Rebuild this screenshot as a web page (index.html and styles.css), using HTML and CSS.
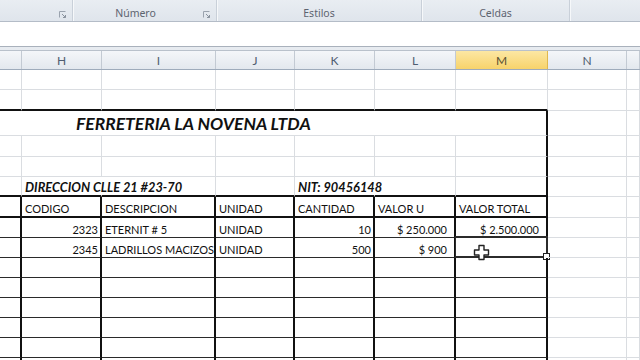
FILE: index.html
```html
<!DOCTYPE html>
<html lang="es">
<head>
    <meta charset="UTF-8">
    <title>Factura - Ferreteria</title>
    <link rel="stylesheet" href="styles.css">
</head>
<body>
    <div class="ribbon">
        <div class="group g-font"><span class="launcher"><svg width="7" height="7" viewBox="0 0 7 7"><path d="M0.5 6.5V0.5H6.5" fill="none" stroke="#9aa3ae"/><path d="M3 3L6.5 6.5M4 6.5H6.5V4" fill="none" stroke="#8a939e"/></svg></span></div>
        <div class="group g-num">Número<span class="launcher"><svg width="7" height="7" viewBox="0 0 7 7"><path d="M0.5 6.5V0.5H6.5" fill="none" stroke="#9aa3ae"/><path d="M3 3L6.5 6.5M4 6.5H6.5V4" fill="none" stroke="#8a939e"/></svg></span></div>
        <div class="group g-styles">Estilos</div>
        <div class="group g-cells">Celdas</div>
        <div class="group g-rest"></div>
    </div>
    <div class="formula-bar"></div>
    <div class="gap-bar"></div>

    <div class="sheet">
        <div class="heads">
            <div class="head"></div>
            <div class="head">H</div>
            <div class="head">I</div>
            <div class="head">J</div>
            <div class="head">K</div>
            <div class="head">L</div>
            <div class="head active">M</div>
            <div class="head">N</div>
            <div class="head"></div>
        </div>

        <div class="row">
            <div class="cell"></div><div class="cell"></div><div class="cell"></div><div class="cell"></div><div class="cell"></div><div class="cell"></div><div class="cell"></div><div class="cell"></div><div class="cell"></div>
        </div>
        <div class="row h21">
            <div class="cell bb"></div><div class="cell bb"></div><div class="cell bb"></div><div class="cell bb"></div><div class="cell bb"></div><div class="cell bb"></div><div class="cell bb"></div><div class="cell"></div><div class="cell"></div>
        </div>

        <!-- encabezado de la factura -->
        <div class="row h25">
            <div class="cell merged br title">FERRETERIA LA NOVENA LTDA</div>
            <div class="cell"></div><div class="cell"></div>
        </div>
        <div class="row h21">
            <div class="cell"></div><div class="cell"></div><div class="cell"></div><div class="cell"></div><div class="cell"></div><div class="cell"></div><div class="cell br"></div><div class="cell"></div><div class="cell"></div>
        </div>
        <div class="row">
            <div class="cell"></div><div class="cell"></div><div class="cell"></div><div class="cell"></div><div class="cell"></div><div class="cell"></div><div class="cell br"></div><div class="cell"></div><div class="cell"></div>
        </div>
        <div class="row">
            <div class="cell bb"></div>
            <div class="cell bb nr info">DIRECCION CLLE 21 #23-70</div>
            <div class="cell bb"></div>
            <div class="cell bb"></div>
            <div class="cell bb nr info">NIT: 90456148</div>
            <div class="cell bb"></div>
            <div class="cell bb br"></div>
            <div class="cell"></div><div class="cell"></div>
        </div>

        <!-- detalle -->
        <div class="row h21 boxed">
            <div class="cell bb br"></div>
            <div class="cell bb br">CODIGO</div>
            <div class="cell bb br">DESCRIPCION</div>
            <div class="cell bb br">UNIDAD</div>
            <div class="cell bb br">CANTIDAD</div>
            <div class="cell bb br">VALOR U</div>
            <div class="cell bb br">VALOR TOTAL</div>
            <div class="cell"></div><div class="cell"></div>
        </div>
        <div class="row boxed">
            <div class="cell bl br"></div>
            <div class="cell bl br num">2323</div>
            <div class="cell bl br">ETERNIT # 5</div>
            <div class="cell bl br">UNIDAD</div>
            <div class="cell bl br num">10</div>
            <div class="cell bl br money">$ 250.000</div>
            <div class="cell bl br money">$ 2.500.000</div>
            <div class="cell"></div><div class="cell"></div>
        </div>
        <div class="row boxed">
            <div class="cell bl br"></div>
            <div class="cell bl br num">2345</div>
            <div class="cell bl br">LADRILLOS MACIZOS</div>
            <div class="cell bl br">UNIDAD</div>
            <div class="cell bl br num">500</div>
            <div class="cell bl br money">$ 900</div>
            <div class="cell bl br selected"><span class="sel-box"><span class="handle"></span></span>
                <svg class="cursor" width="17" height="17" viewBox="0 0 17 17"><path d="M6 1.5H11V6H15.5V11H11V15.5H6V11H1.5V6H6Z" fill="#fff" stroke="#222" stroke-width="1.4" stroke-linejoin="round"/></svg>
            </div>
            <div class="cell"></div><div class="cell"></div>
        </div>
        <div class="row boxed">
            <div class="cell bl br"></div><div class="cell bl br"></div><div class="cell bl br"></div><div class="cell bl br"></div><div class="cell bl br"></div><div class="cell bl br"></div><div class="cell bl br"></div><div class="cell"></div><div class="cell"></div>
        </div>
        <div class="row boxed">
            <div class="cell bl br"></div><div class="cell bl br"></div><div class="cell bl br"></div><div class="cell bl br"></div><div class="cell bl br"></div><div class="cell bl br"></div><div class="cell bl br"></div><div class="cell"></div><div class="cell"></div>
        </div>
        <div class="row boxed">
            <div class="cell bl br"></div><div class="cell bl br"></div><div class="cell bl br"></div><div class="cell bl br"></div><div class="cell bl br"></div><div class="cell bl br"></div><div class="cell bl br"></div><div class="cell"></div><div class="cell"></div>
        </div>
        <div class="row boxed">
            <div class="cell bl br"></div><div class="cell bl br"></div><div class="cell bl br"></div><div class="cell bl br"></div><div class="cell bl br"></div><div class="cell bl br"></div><div class="cell bl br"></div><div class="cell"></div><div class="cell"></div>
        </div>
        <div class="row boxed">
            <div class="cell bl br"></div><div class="cell bl br"></div><div class="cell bl br"></div><div class="cell bl br"></div><div class="cell bl br"></div><div class="cell bl br"></div><div class="cell bl br"></div><div class="cell"></div><div class="cell"></div>
        </div>
        <div class="row boxed">
            <div class="cell bl br"></div><div class="cell bl br"></div><div class="cell bl br"></div><div class="cell bl br"></div><div class="cell bl br"></div><div class="cell bl br"></div><div class="cell bl br"></div><div class="cell"></div><div class="cell"></div>
        </div>
    </div>
</body>
</html>
```

FILE: styles.css
```css
body {
    margin: 0;
    padding: 0;
    width: 640px;
    height: 360px;
    overflow: hidden;
    background-color: #fff;
    font-family: "Lato", "Liberation Sans", sans-serif;
    color: #111;
}

/* ribbon (solo la fila de nombres de grupo) */
.ribbon {
    display: flex;
    height: 21px;
    background: linear-gradient(#e9edf2, #dfe5ec);
    border-bottom: 1px solid #b4bcc7;
    font-family: "Noto Sans", "Open Sans", sans-serif;
    font-size: 10.5px;
    color: #5d6470;
}
.group {
    position: relative;
    display: flex;
    align-items: center;
    justify-content: center;
    border-right: 1px solid #c9d0d9;
    box-shadow: 1px 0 0 #f6f8fa;
    padding-top: 4px;
    box-sizing: border-box;
}
.g-font { width: 73px; }
.g-num { width: 144px; padding-right: 18px; }
.g-styles { width: 205px; }
.g-cells { width: 148px; }
.g-rest { flex: 1; border-right: none; }
.launcher {
    position: absolute;
    right: 6px;
    top: 11px;
    line-height: 0;
}

.formula-bar {
    height: 24px;
    background-color: #fff;
    border-bottom: 1px solid #a9b1bc;
}
.gap-bar {
    height: 3px;
    background-color: #e7ebf0;
}

/* hoja de calculo */
.sheet {
    --cols: 22px 80px 114px 79px 80px 81px 92px 79px 1fr;
    --grid: #dadde1;
}
.heads {
    display: grid;
    grid-template-columns: var(--cols);
    height: 20px;
    border-top: 1px solid #b9c1cb;
    border-bottom: 1px solid #9eabbb;
    box-sizing: border-box;
}
.head {
    display: flex;
    align-items: center;
    justify-content: center;
    background: linear-gradient(#f4f6f9, #e3e8ee);
    border-right: 1px solid #c3cad3;
    font-size: 12px;
    color: #4f5d70;
    padding-top: 1px;
}
.head.active {
    background: linear-gradient(#fce7a3, #f7d36b);
    border-right-color: #e0b84e;
    color: #5a5030;
}

.row {
    display: grid;
    grid-template-columns: var(--cols);
    height: 20px;
}
.row.h21 { height: 21px; }
.row.h25 { height: 25px; }

.cell {
    box-sizing: border-box;
    border-right: 1px solid var(--grid);
    border-bottom: 1px solid var(--grid);
    font-size: 11px;
    line-height: 1;
    padding: 0 3px 2px;
    display: flex;
    align-items: flex-end;
    white-space: nowrap;
    position: relative;
}
.cell.bb { border-bottom: 2px solid #111; }
.cell.bl { border-bottom: 1px solid #2a2a2a; }
.cell.br { border-right: 2px solid #111; }
.cell.nr { border-right-color: transparent; overflow: visible; }

.merged {
    grid-column: 1 / 8;
    padding-left: 76px;
    padding-bottom: 3px;
}
.title {
    font-size: 17.5px;
    font-weight: bold;
    font-style: italic;
}
.info {
    font-weight: bold;
    font-style: italic;
    font-size: 12.8px;
    padding-bottom: 1px;
}

.num { justify-content: flex-end; padding-right: 2px; }
.money { justify-content: flex-end; padding-right: 7px; }

/* celda activa */
.sel-box {
    position: absolute;
    left: -1px;
    top: -2px;
    right: -2px;
    bottom: -1px;
    border: 2px solid #2b2b2b;
    border-left-width: 1px;
    border-top-width: 1px;
}
.handle {
    position: absolute;
    right: -4px;
    bottom: -4px;
    width: 5px;
    height: 5px;
    background-color: #fff;
    border: 1px solid #222;
}
.cursor {
    position: absolute;
    left: 17px;
    top: 6px;
}
```
